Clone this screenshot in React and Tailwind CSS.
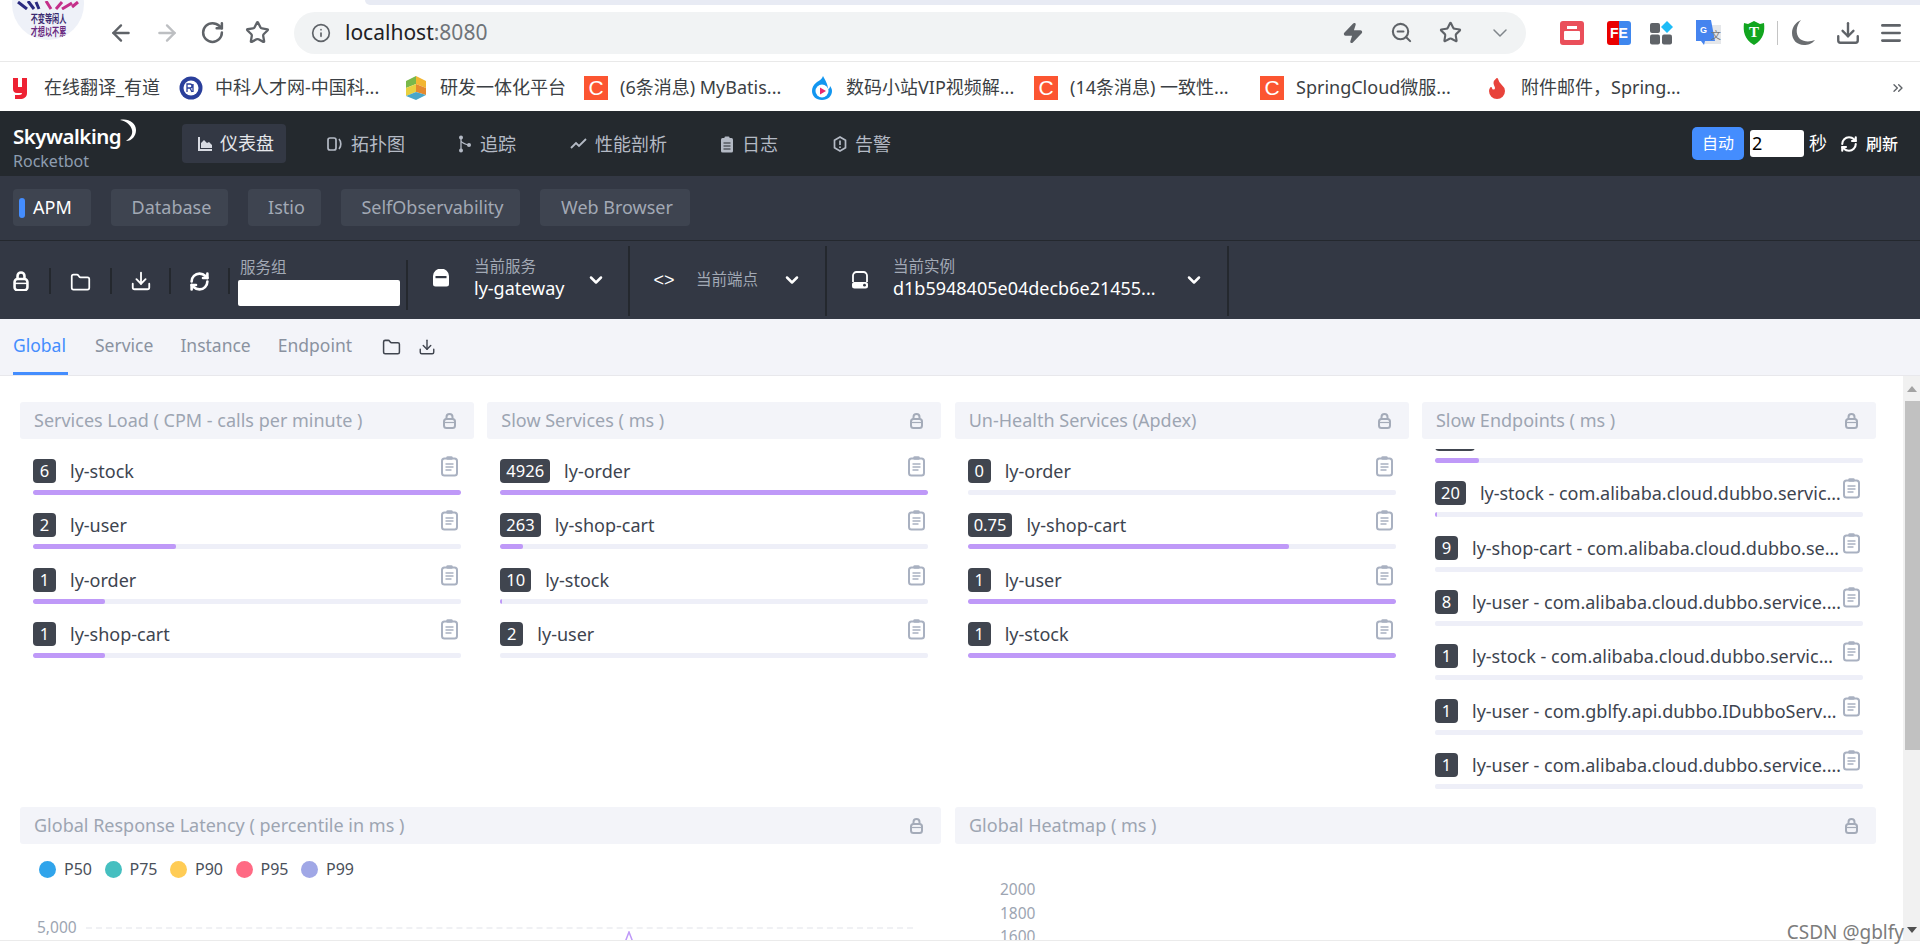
import React from 'react';
import { ArrowLeft, ArrowRight, RotateCw, Star, Info, Zap, ZoomOut, ChevronDown, Download, Menu, Folder, RefreshCw, ChevronsRight, Flame } from 'lucide-react';

const bookmarks = [
  { label: '在线翻译_有道', width: 'w-[167px]', icon: 'youdao', gap: 'ml-[8px]' },
  { label: '中科人才网-中国科...', width: 'w-[225px]', icon: 'cas', gap: 'ml-[12px]' },
  { label: '研发一体化平台', width: 'w-[180px]', icon: 'cube', gap: 'ml-[12px]' },
  { label: '(6条消息) MyBatis...', width: 'w-[226px]', icon: 'csdn', gap: 'ml-[12px]' },
  { label: '数码小站VIP视频解...', width: 'w-[224px]', icon: 'play', gap: 'ml-[12px]' },
  { label: '(14条消息) 一致性...', width: 'w-[226px]', icon: 'csdn', gap: 'ml-[12px]' },
  { label: 'SpringCloud微服...', width: 'w-[225px]', icon: 'csdn', gap: 'ml-[12px]' },
  { label: '附件邮件，Spring...', width: 'w-[405px]', icon: 'fire', gap: 'ml-[12px]' },
];

const navItems = [
  { label: '拓扑图', icon: 'topo', width: 'w-[131px]' },
  { label: '追踪', icon: 'trace', width: 'w-[112px]' },
  { label: '性能剖析', icon: 'perf', width: 'w-[150px]' },
  { label: '日志', icon: 'log', width: 'w-[113px]' },
  { label: '告警', icon: 'alarm', width: 'w-[100px]' },
];

const panels = [
  {
    title: 'Services Load ( CPM - calls per minute )',
    rows: [
      ['6', 'ly-stock', 100],
      ['2', 'ly-user', 33.5],
      ['1', 'ly-order', 16.8],
      ['1', 'ly-shop-cart', 16.8],
    ],
  },
  {
    title: 'Slow Services ( ms )',
    rows: [
      ['4926', 'ly-order', 100],
      ['263', 'ly-shop-cart', 5.3],
      ['10', 'ly-stock', 0.3],
      ['2', 'ly-user', 0],
    ],
  },
  {
    title: 'Un-Health Services (Apdex)',
    rows: [
      ['0', 'ly-order', 0],
      ['0.75', 'ly-shop-cart', 75],
      ['1', 'ly-user', 100],
      ['1', 'ly-stock', 100],
    ],
  },
  {
    title: 'Slow Endpoints ( ms )',
    scrolled: true,
    rows: [
      // first row is scrolled out, only the bottom of its badge and its bar show
      ['210', '', 10.3],
      ['20', 'ly-stock - com.alibaba.cloud.dubbo.service.IDubboService', 0.4],
      ['9', 'ly-shop-cart - com.alibaba.cloud.dubbo.service.IDubboService', 0],
      ['8', 'ly-user - com.alibaba.cloud.dubbo.service.IDubboMetadata', 0],
      ['1', 'ly-stock - com.alibaba.cloud.dubbo.service.IDubboService', 0],
      ['1', 'ly-user - com.gblfy.api.dubbo.IDubboServiceImpl.get', 0],
      ['1', 'ly-user - com.alibaba.cloud.dubbo.service.IDubboMetadata', 0],
    ],
  },
];

const legend = [
  { label: 'P50', color: 'bg-[#30a4eb]' },
  { label: 'P75', color: 'bg-[#45bfc0]' },
  { label: 'P90', color: 'bg-[#ffcc55]' },
  { label: 'P95', color: 'bg-[#ff6a84]' },
  { label: 'P99', color: 'bg-[#a0a7e6]' },
];

const Favicon = ({ type }) => {
  if (type === 'csdn') {
    return (
      <div className="w-6 h-6 bg-[#fc5531] text-white flex items-center justify-center text-[21px] leading-none font-['Liberation_Sans',sans-serif]">C</div>
    );
  }
  if (type === 'youdao') {
    return (
      <svg className="-ml-[8px]" width="16" height="24" viewBox="0 0 16 24" fill="#ee2233">
        <path d="M1 2h5v9h4V2h5v15c0 4-3 6-7 6H3v-4h4c2 0 3-1 3-2H5c-3 0-4-2-4-4z" />
      </svg>
    );
  }
  if (type === 'cas') {
    return (
      <svg width="24" height="24" viewBox="0 0 24 24">
        <circle cx="12" cy="12" r="11.5" fill="#2a3f9b" />
        <circle cx="12" cy="12" r="7.5" fill="#fff" />
        <path d="M8 16V8h3a2 2 0 0 1 0 4H8m3 0 2 4m1-8v8" stroke="#2a3f9b" strokeWidth="1.3" fill="none" />
      </svg>
    );
  }
  if (type === 'cube') {
    return (
      <svg width="24" height="26" viewBox="0 0 24 26">
        <path d="M12 1 22 6v7l-10-4z" fill="#f2b632" />
        <path d="M2 6l10-5v8L2 13z" fill="#79b84a" />
        <path d="M2 13l10-4v8l-10 4z" fill="#e8d040" />
        <path d="M12 9l10 4v7l-10-3z" fill="#e58a2e" />
        <path d="M2 21l10-4 10 3-10 5z" fill="#4aa6c8" />
      </svg>
    );
  }
  if (type === 'play') {
    return (
      <svg width="24" height="26" viewBox="0 0 24 26">
        <path d="M13 1c-1 3-3 4-6 6C3 10 2 13 2 16c0 5 4 9 10 9s10-4 10-9c0-2-1-4-2-5 0 2-1 3-2 3 0-5-3-9-5-13z" fill="#1296f0" />
        <circle cx="12" cy="16" r="6.5" fill="#fff" />
        <path d="M10 12.5v7l6-3.5z" fill="#e9296f" />
      </svg>
    );
  }
  return <Flame size={24} className="text-[#e8433b] fill-[#e8433b]" />;
};

const NavIcon = ({ type }) => {
  if (type === 'chart') {
    return (
      <svg width="16" height="16" viewBox="0 0 16 16" fill="#d8dbe2">
        <path d="M1 1h2v12h12v2H1z" />
        <path d="M4 12V7l3-3 3 3 2-1 3 3v3z" />
      </svg>
    );
  }
  if (type === 'topo') {
    return (
      <svg width="16" height="16" viewBox="0 0 16 16" fill="none" stroke="#b4bac5" strokeWidth="1.7">
        <rect x="1" y="2" width="8" height="12" rx="2" />
        <path d="M12 3c2.400 2.500 2.400 7.500 0 10" />
      </svg>
    );
  }
  if (type === 'trace') {
    return (
      <svg width="14" height="18" viewBox="0 0 14 18" fill="#b4bac5">
        <circle cx="3" cy="2.500" r="2" />
        <circle cx="3" cy="15.500" r="2" />
        <circle cx="11" cy="10" r="2" />
        <path d="M3 3v12M3 6c1 2 4 3 7 4" stroke="#b4bac5" strokeWidth="1.300" fill="none" />
      </svg>
    );
  }
  if (type === 'perf') {
    return (
      <svg width="17" height="12" viewBox="0 0 17 12" fill="none" stroke="#b4bac5" strokeWidth="1.800">
        <path d="M1 10l5-5 3 3 7-7" />
      </svg>
    );
  }
  if (type === 'log') {
    return (
      <svg width="14" height="17" viewBox="0 0 14 17">
        <rect x="1" y="2" width="12" height="14.500" rx="1.500" fill="#b4bac5" />
        <rect x="4.500" y="0.500" width="5" height="3" rx="1" fill="#b4bac5" />
        <path d="M3.500 7h7M3.500 10h7M3.500 13h7" stroke="#24292e" strokeWidth="1.200" />
      </svg>
    );
  }
  return (
    <svg width="14" height="16" viewBox="0 0 14 16" fill="none" stroke="#b4bac5" strokeWidth="1.700">
      <path d="M7 1l5.500 3.200v7.600L7 15l-5.500-3.200V4.200z" />
      <path d="M7 4.500v4.500M7 10.500v1.500" />
    </svg>
  );
};

const OutlineLock = ({ size = 16, color = '#ffffff', stroke = 2.600 }) => (
  <svg width={size} height={size * 1.3} viewBox="0 0 16 21" fill="none" stroke={color} strokeWidth={stroke}>
    <rect x="1.500" y="8" width="13" height="11.500" rx="3" />
    <path d="M4.500 8V5a3.500 3.500 0 0 1 7 0v3" />
    <path d="M1.500 12.500h13" strokeWidth="1.500" />
  </svg>
);

const ServiceLock = () => (
  <svg width="18" height="18" viewBox="0 0 18 18" fill="#ffffff">
    <path d="M1 7a7 6.500 0 0 1 16 0v8a2.500 2.500 0 0 1-2.500 2.500h-11A2.500 2.500 0 0 1 1 15z" />
    <rect x="3.500" y="7" width="11" height="2.200" fill="#333844" />
  </svg>
);

const ServerIcon = () => (
  <svg width="18" height="18" viewBox="0 0 18 18" fill="none">
    <path d="M2 11V4.500A3.500 3.500 0 0 1 5.500 1h7A3.500 3.500 0 0 1 16 4.500V11" stroke="#fff" strokeWidth="1.800" />
    <rect x="1" y="11" width="16" height="6.500" rx="2.500" fill="#fff" />
    <circle cx="13.500" cy="14.200" r="1.400" fill="#333844" />
  </svg>
);

const SmallLock = () => (
  <svg width="13" height="16" viewBox="0 0 13 16" fill="none" stroke="#a4abb9" strokeWidth="2">
    <rect x="1" y="6" width="11" height="9" rx="2.500" />
    <path d="M3.500 6V4a3 3 0 0 1 6 0v2" />
    <path d="M1 9.500h11" strokeWidth="1.200" />
  </svg>
);

const ClipboardIcon = () => (
  <svg width="17" height="21" viewBox="0 0 17 21" fill="none" stroke="#a9b1c1">
    <rect x="1" y="2.500" width="15" height="17" rx="2.500" strokeWidth="2" />
    <rect x="5.500" y="0.500" width="6" height="3" rx="1" fill="#a9b1c1" strokeWidth="0.500" />
    <path d="M4.500 8h8M4.500 11h8M4.500 14h6" strokeWidth="1.300" />
  </svg>
);

const Separator = ({ className }) => <div className={`w-[2px] bg-[#24282e] shrink-0 ${className}`} />;

const Row = ({ value, name, percent }) => (
  <div className="h-[54.33px]">
    <div className="flex items-start h-[24px]">
      <span className="h-[24px] min-w-[23px] px-[6px] rounded-[4px] bg-[#40454f] text-white text-[16.500px] leading-[24px] text-center shrink-0">{value}</span>
      <span className="ml-[14px] flex-1 min-w-0 truncate text-[#3d444f] text-[18px] leading-[24px]">{name}</span>
      <span className="shrink-0 ml-[2px] -mt-[3px] mr-[3px]"><ClipboardIcon /></span>
    </div>
    <div className="mt-[7px] h-[5px] rounded-[2px] bg-[#eeeff8] overflow-hidden">
      <div className="h-full rounded-[2px] bg-[#bf99f8]" style={{ width: `${percent}%` }} />
    </div>
  </div>
);

const PanelHeader = ({ title }) => (
  <div className="h-[37px] rounded-[3px] bg-[#f3f4f9] flex items-center justify-between pl-[14px] pr-[18px]">
    <span className="text-[#9da5b2] text-[18px]">{title}</span>
    <SmallLock />
  </div>
);

const Panel = ({ panel }) => (
  <div>
    <PanelHeader title={panel.title} />
    <div className="mt-[10px] h-[351px] overflow-hidden px-[13px]">
      <div className={panel.scrolled ? 'pt-[10px] -mt-[32px]' : 'pt-[10px]'}>
        {panel.rows.map((row, index) => (
          <Row key={index} value={row[0]} name={row[1]} percent={row[2]} />
        ))}
      </div>
    </div>
  </div>
);

const BrowserChrome = () => (
  <>
    <div className="h-[5px] flex">
      <div className="w-[365px] bg-white" />
      <div className="flex-1 bg-[#e8ebf4] rounded-bl-[6px]" />
    </div>
    <div className="h-[57px] border-b border-[#e9e9e9] bg-white flex items-center text-[#5f6368] pb-[1px]">
      <div className="ml-[98px] w-[46px] flex justify-center"><ArrowLeft size={26} strokeWidth={2.200} /></div>
      <div className="w-[46px] flex justify-center text-[#bdbfc2]"><ArrowRight size={26} strokeWidth={2.200} /></div>
      <div className="w-[44px] flex justify-center"><RotateCw size={25} strokeWidth={2.400} /></div>
      <div className="w-[46px] flex justify-center"><Star size={25} strokeWidth={2.200} /></div>
      <div className="ml-[14px] w-[1232px] h-[42px] rounded-full bg-[#f1f3f4] flex items-center pl-[17px] pr-[14px]">
        <Info size={20} />
        <span className="ml-[14px] text-[21px] text-[#202124]">localhost<span className="text-[#6f7479]">:8080</span></span>
        <div className="ml-auto flex items-center gap-[26px]">
          <Zap size={22} className="fill-[#5f6368] stroke-[#5f6368]" />
          <ZoomOut size={23} strokeWidth={2.200} />
          <Star size={23} strokeWidth={2.200} />
          <ChevronDown size={24} strokeWidth={1.500} className="text-[#80868b]" />
        </div>
      </div>
      <div className="ml-[34px] flex items-center">
        <div className="w-[24px] h-[24px] rounded-[3px] bg-[#ea4f5a] flex flex-col items-center justify-center gap-[2px]">
          <div className="w-[10px] h-[3px] bg-white" />
          <div className="w-[16px] h-[9px] rounded-[1px] bg-white" />
        </div>
        <div className="ml-[23px] w-[24px] h-[24px] rounded-[3px] bg-[linear-gradient(90deg,#ea0000_50%,#3f87ee_50%)] text-white text-[14px] leading-[24px] font-bold text-center font-['Liberation_Sans',sans-serif]">FE</div>
        <svg className="ml-[19px]" width="23" height="24" viewBox="0 0 23 24">
          <rect x="0" y="2" width="10" height="10" rx="2" fill="#5f6368" />
          <rect x="0" y="13.500" width="10" height="10" rx="2" fill="#5f6368" />
          <rect x="12" y="13.500" width="10" height="10" rx="2" fill="#5f6368" />
          <path d="M17 0l6 6-6 6-6-6z" fill="#1ebcf7" />
        </svg>
        <svg className="ml-[23px]" width="25" height="26" viewBox="0 0 25 26">
          <rect x="8" y="5" width="17" height="19" fill="#e5e7ea" />
          <path d="M0 0h15l4 21H9l-1 4-3-4H0z" fill="#4584ef" />
          <text x="4" y="13" fontSize="9" fontWeight="700" fill="#fff" fontFamily="Liberation Sans">G</text>
          <text x="15" y="19" fontSize="10" fill="#777" fontFamily="Noto Sans CJK SC">文</text>
        </svg>
        <svg className="ml-[22px]" width="22" height="26" viewBox="0 0 22 26">
          <path d="M1 3l4 1 6-3 6 3 4-1c1 8 0 16-10 22C1 19 0 11 1 3z" fill="#12a51f" />
          <text x="11" y="17" fontSize="15" fontWeight="700" fill="#fff" textAnchor="middle" fontFamily="Liberation Serif">T</text>
        </svg>
        <div className="ml-[12px] w-px h-[24px] bg-[#c4c4c4]" />
        <svg className="ml-[13px]" width="25" height="25" viewBox="0 0 25 25">
          <path d="M10 0C5 6 4 14 9 19c4 3 10 3 15 1-3 4-7 5-11 5C6 25 1 20 1 13 1 7 5 2 10 0z" fill="#6a6d70" />
        </svg>
        <div className="ml-[19px] w-[26px] flex justify-center"><Download size={26} strokeWidth={2.200} /></div>
        <div className="ml-[17px] w-[26px] flex justify-center"><Menu size={26} strokeWidth={2.400} /></div>
      </div>
    </div>
    <div className="h-[49px] bg-white flex items-center pl-[12px] pt-[2px] text-[#3b3f44] text-[18px]">
      {bookmarks.map((mark) => (
        <div key={mark.label} className={`${mark.width} flex items-center shrink-0`}>
          <div className="w-[24px] flex justify-center shrink-0"><Favicon type={mark.icon} /></div>
          <span className={`${mark.gap} whitespace-nowrap`}>{mark.label}</span>
        </div>
      ))}
      <ChevronsRight size={16} className="text-[#5f6368]" />
    </div>
  </>
);

const TopNav = () => (
  <div className="h-[65px] bg-[#24292e] flex items-center">
    <div className="w-[182px] pl-[13px] pt-[6px] shrink-0">
      <div className="flex items-start h-[26px]">
        <span className="text-white text-[20.500px] leading-[26px] font-semibold tracking-[-0.500px]">Skywalking</span>
        <svg className="-ml-[3px] -mt-[4px]" width="20" height="24" viewBox="0 0 20 24">
          <path d="M2 1c8-2 16 3 16 10 0 6-4 11-10 11 4-3 7-6 6-11C13 6 8 2 2 1z" fill="#ffffff" />
        </svg>
      </div>
      <div className="text-[#8e9db0] text-[16px] leading-[18px] mt-[3px]">Rocketbot</div>
    </div>
    <div className="w-[104px] h-[39px] rounded-[4px] bg-[#333844] flex items-center pl-[15px] shrink-0">
      <NavIcon type="chart" />
      <span className="ml-[7px] text-[18px] text-[#e4e6ea]">仪表盘</span>
    </div>
    <div className="ml-[41px] flex items-center pt-[1px]">
      {navItems.map((item) => (
        <div key={item.label} className={`${item.width} flex items-center shrink-0`}>
          <NavIcon type={item.icon} />
          <span className="ml-[8px] text-[18px] text-[#b4bac5] whitespace-nowrap">{item.label}</span>
        </div>
      ))}
    </div>
    <div className="ml-auto flex items-center pr-[22px]">
      <div className="w-[52px] h-[33px] rounded-[5px] bg-[#448dfe] text-white text-[16px] leading-[33px] text-center">自动</div>
      <div className="ml-[6px] w-[54px] h-[27px] rounded-[3px] bg-white text-black text-[18px] leading-[27px] pl-[2px]">2</div>
      <span className="ml-[5px] text-white text-[18px]">秒</span>
      <RefreshCw size={18} strokeWidth={2.800} className="ml-[13px] text-white" />
      <span className="ml-[8px] text-white text-[16px] font-medium">刷新</span>
    </div>
  </div>
);

const LayerTabs = () => (
  <div className="h-[64px] bg-[#333844] flex items-start pt-[13px] pl-[13px] gap-[20px] text-[18px]">
    <div className="w-[78px] h-[37px] rounded-[4px] bg-[#3e4450] flex items-center pl-[6px] text-white">
      <span className="w-[6px] h-[20px] rounded-full bg-[#448dfe]" />
      <span className="ml-[8px]">APM</span>
    </div>
    <div className="w-[117px] h-[37px] rounded-[4px] bg-[#3e4450] text-[#a2a9b5] leading-[37px] text-center pl-[4px]">Database</div>
    <div className="w-[73px] h-[37px] rounded-[4px] bg-[#3e4450] text-[#a2a9b5] leading-[37px] text-center pl-[4px]">Istio</div>
    <div className="w-[179px] h-[37px] rounded-[4px] bg-[#3e4450] text-[#a2a9b5] leading-[37px] text-center pl-[4px]">SelfObservability</div>
    <div className="w-[150px] h-[37px] rounded-[4px] bg-[#3e4450] text-[#a2a9b5] leading-[37px] text-center pl-[4px]">Web Browser</div>
  </div>
);

const ToolBar = () => (
  <div className="h-[79px] bg-[#333844] border-t border-[#24282e] flex items-center text-white">
    <div className="w-[49px] pl-[13px] pt-[2px]"><OutlineLock /></div>
    <Separator className="h-[26px] mt-[2px]" />
    <div className="w-[59px] flex justify-center pt-[4px]"><Folder size={21} strokeWidth={2} /></div>
    <Separator className="h-[26px] mt-[2px]" />
    <div className="w-[57px] flex justify-center pt-[2px]"><Download size={22} strokeWidth={2} /></div>
    <Separator className="h-[26px] mt-[2px]" />
    <div className="w-[57px] flex justify-center pt-[2px]"><RefreshCw size={21} strokeWidth={3} /></div>
    <Separator className="h-[26px] mt-[2px]" />
    <div className="ml-[8px] w-[162px] pt-[2px]">
      <div className="text-[#a2a9b5] text-[15.500px] leading-[20px] pl-[2px]">服务组</div>
      <div className="mt-[3px] h-[26px] rounded-[2px] bg-white" />
    </div>
    <Separator className="ml-[6px] h-[50px] mt-[9px]" />
    <div className="ml-[24px] w-[18px] mb-[5px]"><ServiceLock /></div>
    <div className="ml-[24px] w-[112px] mb-[4px]">
      <div className="text-[#a2a9b5] text-[15.500px] leading-[20px]">当前服务</div>
      <div className="text-[18px] leading-[24px]">ly-gateway</div>
    </div>
    <ChevronDown size={20} strokeWidth={3} />
    <Separator className="ml-[22px] h-[70px] mt-[1px]" />
    <div className="ml-[24px] w-[20px] flex justify-center text-[18px] leading-none font-['Liberation_Sans',sans-serif]">&lt;&gt;</div>
    <div className="ml-[22px] w-[86px] text-[#a2a9b5] text-[15.500px]">当前端点</div>
    <ChevronDown size={20} strokeWidth={3} />
    <Separator className="ml-[23px] h-[70px] mt-[1px]" />
    <div className="ml-[24px] w-[18px]"><ServerIcon /></div>
    <div className="ml-[24px] w-[291px] mb-[4px]">
      <div className="text-[#a2a9b5] text-[15.500px] leading-[20px]">当前实例</div>
      <div className="text-[18px] leading-[24px] whitespace-nowrap">d1b5948405e04decb6e21455...</div>
    </div>
    <ChevronDown size={20} strokeWidth={3} />
    <Separator className="ml-[23px] h-[70px] mt-[1px]" />
  </div>
);

const PageTabs = () => (
  <div className="h-[57px] bg-[#f3f4f9] border-b border-[#e8e8ec] flex items-stretch pl-[13px] text-[17.500px] text-[#8a92a0]">
    <div className="w-[55px] border-b-[3px] border-[#448dfe] text-[#448dfe] flex items-center">Global</div>
    <div className="ml-[27px] pb-[3px] flex items-center">Service</div>
    <div className="ml-[27px] pb-[3px] flex items-center">Instance</div>
    <div className="ml-[27px] pb-[3px] flex items-center">Endpoint</div>
    <div className="ml-[30px] flex items-center text-[#40454f]"><Folder size={19} strokeWidth={1.900} /></div>
    <div className="ml-[17px] flex items-center text-[#40454f]"><Download size={18} strokeWidth={1.900} /></div>
  </div>
);

const Scrollbar = () => (
  <div className="w-[17px] bg-[#f1f1f1] flex flex-col items-end shrink-0">
    <div className="h-[25px] w-full flex items-center justify-center">
      <div className="w-0 h-0 border-x-[5px] border-x-transparent border-b-[6px] border-b-[#a3a3a3]" />
    </div>
    <div className="w-[15px] h-[349px] bg-[#c1c1c1]" />
    <div className="mt-auto h-[20px] w-full flex items-center justify-center">
      <div className="w-0 h-0 border-x-[5px] border-x-transparent border-t-[6px] border-t-[#505050]" />
    </div>
  </div>
);

const App = () => {
  return (
    <div className="h-[952px] w-[1920px] overflow-hidden bg-white relative font-['Noto_Sans','Noto_Sans_CJK_SC',sans-serif]">
      {/* avatar overlapping the tab strip */}
      <div className="absolute left-[12px] -top-[32px] w-[72px] h-[72px] rounded-full bg-[#eef1f8] overflow-hidden flex flex-col items-center justify-end pb-[3px] z-10">
        <svg className="mb-[2px]" width="64" height="9" viewBox="0 0 64 9" fill="none" strokeWidth="3">
          <path d="M2 1l9 7M12 0l6 8M20 1l3 7" stroke="#2a2a80" />
          <path d="M30 0l5 8M40 8l6-7M46 8l10-6M56 6l6-5" stroke="#c42f8a" />
        </svg>
        <div className="scale-x-[0.65] text-[11px] leading-[12.500px] text-[#3a2a70] font-['Noto_Sans_CJK_SC',sans-serif] whitespace-nowrap font-bold">不变等闲人</div>
        <div className="scale-x-[0.65] text-[11px] leading-[12.500px] text-[#6a2a80] font-['Noto_Sans_CJK_SC',sans-serif] whitespace-nowrap font-bold">才想以不累</div>
      </div>

      <BrowserChrome />
      <TopNav />
      <LayerTabs />
      <ToolBar />
      <PageTabs />

      <div className="h-[564px] flex">
        <div className="flex-1 min-w-0 overflow-hidden pl-[20px] pr-[27px] pt-[26px]">
          <div className="grid grid-cols-4 gap-x-[13.330px]">
            {panels.map((panel) => (
              <Panel key={panel.title} panel={panel} />
            ))}
          </div>
          <div className="mt-[7px] grid grid-cols-2 gap-x-[14px]">
            <div>
              <PanelHeader title="Global Response Latency ( percentile in ms )" />
              <div className="mt-[17px] pl-[19px] flex">
                {legend.map((item) => (
                  <div key={item.label} className="w-[65.500px] flex items-center">
                    <span className={`w-[17px] h-[17px] rounded-full ${item.color}`} />
                    <span className="ml-[8px] text-[16px] leading-[17px] text-[#4a505a]">{item.label}</span>
                  </div>
                ))}
              </div>
              <div className="relative mt-[40px] pl-[17px] pr-[28px] flex items-center text-[#9da5b2] text-[15.500px] h-[20px]">
                <span className="w-[49px]">5,000</span>
                <div className="flex-1 border-t-2 border-dashed border-[#f0f1f4]" />
                <svg className="absolute left-[603px] top-[13px]" width="12" height="14" viewBox="0 0 12 14">
                  <path d="M1 14 6 1l5 13" fill="none" stroke="#bf99f8" strokeWidth="1.500" />
                </svg>
              </div>
            </div>
            <div className="pl-[45px] -ml-[45px]">
              <PanelHeader title="Global Heatmap ( ms )" />
              <div className="mt-[34px] pl-[45px] text-[#9da5b2] text-[15.500px] leading-[23.500px]">
                <div>2000</div>
                <div>1800</div>
                <div>1600</div>
              </div>
            </div>
          </div>
        </div>
        <Scrollbar />
      </div>

      <div className="h-[12px] border-t border-[#ebebeb] bg-white" />

      {/* image watermark */}
      <div className="absolute right-[16px] bottom-[9px] text-[#7c7c7c] text-[19px] leading-[22px] z-10">CSDN @gblfy</div>
    </div>
  );
};

export default App;
